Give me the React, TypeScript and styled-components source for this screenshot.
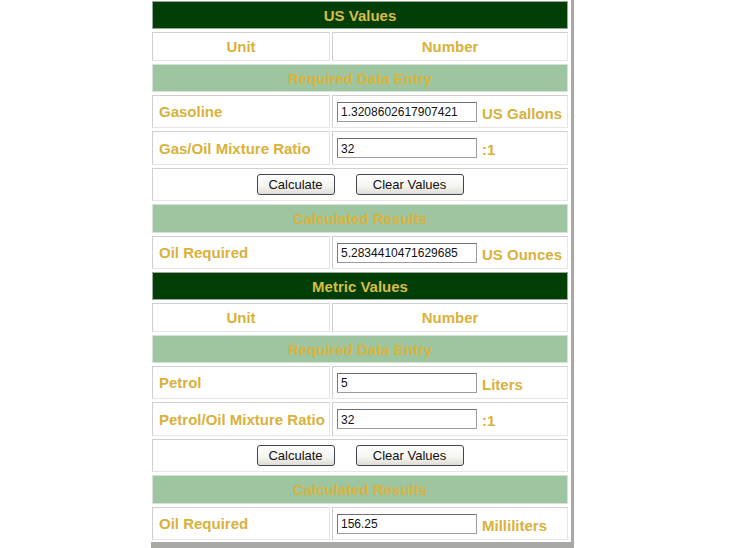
import React from "react";
import styled, { createGlobalStyle } from "styled-components";

const GlobalStyle = createGlobalStyle`
  html, body {
    margin: 0;
    padding: 0;
    background: #ffffff;
    font-family: "Liberation Sans", Arial, sans-serif;
  }
`;

const GOLD = "#d9b13b";

type Section = {
  title: string;
  amountLabel: string;
  amount: string;
  amountUnit: string;
  ratioLabel: string;
  ratio: string;
  result: string;
  resultUnit: string;
};

const sections: Section[] = [
  {
    title: "US Values",
    amountLabel: "Gasoline",
    amount: "1.3208602617907421",
    amountUnit: "US Gallons",
    ratioLabel: "Gas/Oil Mixture Ratio",
    ratio: "32",
    result: "5.2834410471629685",
    resultUnit: "US Ounces",
  },
  {
    title: "Metric Values",
    amountLabel: "Petrol",
    amount: "5",
    amountUnit: "Liters",
    ratioLabel: "Petrol/Oil Mixture Ratio",
    ratio: "32",
    result: "156.25",
    resultUnit: "Milliliters",
  },
];

const App: React.FC = () => {
  return (
    <>
      <GlobalStyle />
      <Frame>
        {sections.map((s) => (
          <Grid key={s.title}>
            <Banner $h={28}>{s.title}</Banner>
            <HeadCell $h={29}>Unit</HeadCell>
            <HeadCell $h={29}>Number</HeadCell>
            <SubBanner $h={28}>Required Data Entry</SubBanner>

            <LabelCell $h={33}>{s.amountLabel}</LabelCell>
            <ValueCell $h={33}>
              <Field defaultValue={s.amount} />
              <Suffix>{s.amountUnit}</Suffix>
            </ValueCell>

            <LabelCell $h={34}>{s.ratioLabel}</LabelCell>
            <ValueCell $h={34}>
              <Field defaultValue={s.ratio} />
              <Suffix>:1</Suffix>
            </ValueCell>

            <ButtonRow $h={33}>
              <Button $w={78}>Calculate</Button>
              <Button $w={108}>Clear Values</Button>
            </ButtonRow>

            <SubBanner $h={29}>Calculated Results</SubBanner>

            <LabelCell $h={33}>Oil Required</LabelCell>
            <ValueCell $h={33}>
              <Field defaultValue={s.result} readOnly />
              <Suffix>{s.resultUnit}</Suffix>
            </ValueCell>
          </Grid>
        ))}
      </Frame>
    </>
  );
};

const Frame = styled.div`
  margin-left: 151px;
  width: 416px;
  padding: 1px 3px 2px 1px;
  display: flex;
  flex-direction: column;
  gap: 3px;
  background: #ffffff;
  border-right: 3px solid #a8a8a4;
  border-bottom: 6px solid #a8a8a4;
`;

const Grid = styled.div`
  display: grid;
  grid-template-columns: 178px 236px;
  column-gap: 2px;
  row-gap: 3px;
`;

const Cell = styled.div<{ $h: number }>`
  box-sizing: border-box;
  height: ${(p) => p.$h}px;
  border: 1px solid #cfcfcf;
  border-right-color: #e6e6e6;
  border-bottom-color: #e6e6e6;
  display: flex;
  align-items: center;
  font-size: 15px;
  font-weight: bold;
  color: ${GOLD};
`;

const Banner = styled(Cell)`
  grid-column: 1 / -1;
  justify-content: center;
  background: #023f07;
  border-color: #9aa89a;
  color: #d8bd45;
`;

const SubBanner = styled(Cell)`
  grid-column: 1 / -1;
  justify-content: center;
  background: #9dc5a0;
  border-color: #d6e4d6;
  color: #d9b33e;
`;

const HeadCell = styled(Cell)`
  justify-content: center;
`;

const LabelCell = styled(Cell)`
  padding-left: 6px;
`;

const ValueCell = styled(Cell)`
  padding-left: 4px;
  gap: 5px;
`;

const Field = styled.input`
  box-sizing: border-box;
  width: 140px;
  height: 20px;
  margin: 0;
  padding: 1px 3px 0;
  border: 1px solid #9c9c9c;
  border-top-color: #6e6e6e;
  border-left-color: #7c7c7c;
  font-family: "Liberation Sans", Arial, sans-serif;
  font-size: 12px;
  color: #111;
  background: #fff;
  outline: none;
`;

const Suffix = styled.span`
  margin-top: 3px;
  white-space: nowrap;
`;

const ButtonRow = styled(Cell)`
  grid-column: 1 / -1;
  justify-content: center;
  gap: 21px;
`;

const Button = styled.button<{ $w: number }>`
  box-sizing: border-box;
  width: ${(p) => p.$w}px;
  height: 21px;
  margin: 0;
  padding: 0;
  border: 1px solid #3f4650;
  border-radius: 3px;
  background: linear-gradient(#ffffff, #f4f4f0 60%, #dedcd4);
  font-family: "Liberation Sans", Arial, sans-serif;
  font-size: 13px;
  font-weight: normal;
  color: #111;
`;

export default App;
